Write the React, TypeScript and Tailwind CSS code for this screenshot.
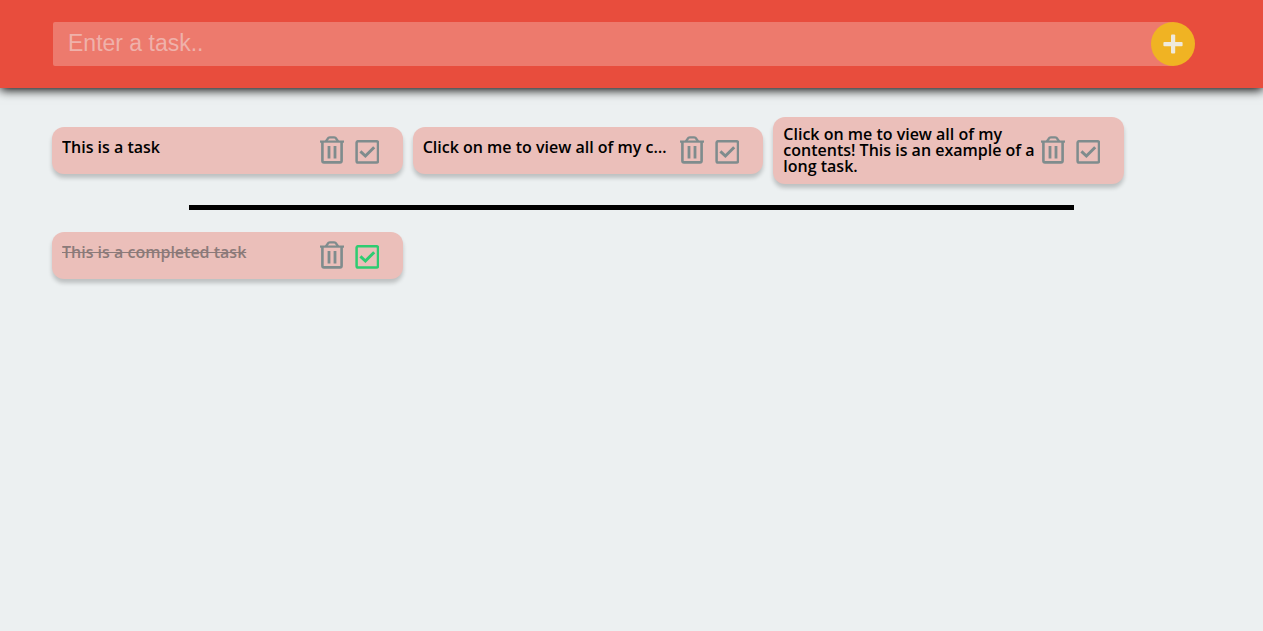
import { useState } from "react";

type Task = { id: number; text: string; done: boolean; expanded: boolean };

const LONG_TEXT = "Click on me to view all of my contents! This is an example of a long task.";

const initialTasks: Task[] = [
  { id: 1, text: "This is a task", done: false, expanded: false },
  { id: 2, text: LONG_TEXT, done: false, expanded: false },
  { id: 3, text: LONG_TEXT, done: false, expanded: true },
  { id: 4, text: "This is a completed task", done: true, expanded: false },
];

function TrashIcon() {
  return (
    <svg width="24" height="28" viewBox="0 0 24 28" fill="none" stroke="currentColor" aria-hidden="true">
      <path d="M0 5.6H24" strokeWidth="2.2" />
      <path d="M6 5.4L7.6 2.8Q8.4 1.4 9.8 1.4H14.2Q15.6 1.4 16.4 2.8L18 5.4" strokeWidth="2.4" />
      <path d="M2.4 5.5V24.8Q2.4 26.4 4 26.4H20Q21.6 26.4 21.6 24.8V5.5" strokeWidth="2.6" />
      <path d="M9 10V22.6M15 10V22.6" strokeWidth="2.8" />
    </svg>
  );
}

function CheckIcon() {
  return (
    <svg width="24" height="24" viewBox="0 0 24 24" fill="none" stroke="currentColor" aria-hidden="true">
      <rect x="1.6" y="1.2" width="21.4" height="21.4" rx="1.6" strokeWidth="2.5" />
      <path d="M5.4 11.4L10.4 16L19.2 7.2" strokeWidth="3" />
    </svg>
  );
}

type CardProps = { task: Task; onExpand: () => void; onRemove: () => void; onToggle: () => void };

function TaskCard({ task, onExpand, onRemove, onToggle }: CardProps) {
  return (
    <li className="flex items-center rounded-[12px] bg-[#ebbfba] pt-[9px] pr-6 pb-[10px] pl-[10px] shadow-[0_4px_4px_rgba(0,0,0,0.2)]">
      <button
        type="button"
        onClick={onExpand}
        className={`min-w-0 flex-1 text-left text-base font-semibold ${
          task.expanded ? "leading-4" : "mb-1.5 truncate pr-2 leading-[22px]"
        } ${task.done ? "text-[#8b7a79] line-through" : "text-black"}`}
      >
        {task.text}
      </button>
      <button type="button" aria-label="Delete task" onClick={onRemove} className="shrink-0 text-[#7f8c8d]">
        <TrashIcon />
      </button>
      <button
        type="button"
        aria-label="Toggle completed"
        onClick={onToggle}
        className={`mt-1 ml-[11px] shrink-0 ${task.done ? "text-[#2ecc71]" : "text-[#7f8c8d]"}`}
      >
        <CheckIcon />
      </button>
    </li>
  );
}

export default function App() {
  const [tasks, setTasks] = useState(initialTasks);
  const [draft, setDraft] = useState("");

  const update = (id: number, change: (task: Task) => Task) =>
    setTasks((all) => all.map((task) => (task.id === id ? change(task) : task)));

  const add = () => {
    const text = draft.trim();
    if (!text) return;
    setTasks((all) => [...all, { id: Date.now(), text, done: false, expanded: false }]);
    setDraft("");
  };

  const list = (done: boolean) => (
    <ul className="grid grid-cols-3 items-center gap-[10px] pr-[139px] pl-[52px]">
      {tasks
        .filter((task) => task.done === done)
        .map((task) => (
          <TaskCard
            key={task.id}
            task={task}
            onExpand={() => update(task.id, (t) => ({ ...t, expanded: !t.expanded }))}
            onRemove={() => setTasks((all) => all.filter((t) => t.id !== task.id))}
            onToggle={() => update(task.id, (t) => ({ ...t, done: !t.done }))}
          />
        ))}
    </ul>
  );

  return (
    <div className="min-h-screen bg-[#ecf0f1] font-['Open_Sans',sans-serif]">
      <header className="bg-[#e84d3d] shadow-[0_2px_10px_#000]">
        <form
          className="flex items-center py-[22px] pr-[68px] pl-[53px]"
          onSubmit={(event) => {
            event.preventDefault();
            add();
          }}
        >
          <input
            type="text"
            aria-label="New task"
            placeholder="Enter a task.."
            value={draft}
            onChange={(event) => setDraft(event.target.value)}
            className="h-11 min-w-0 flex-1 rounded-[2px] bg-[#ed7a6d] pr-8 pb-[2px] pl-[15px] font-['Liberation_Sans',sans-serif] text-[23px] text-[#ecf0f1] outline-none placeholder:text-[#efb1aa]"
          />
          <button
            type="submit"
            aria-label="Add task"
            className="-ml-[22px] flex size-11 shrink-0 items-center justify-center rounded-full bg-[#f0b323] text-[#efeadc]"
          >
            <svg width="20" height="20" viewBox="0 0 20 20" fill="currentColor" aria-hidden="true">
              <rect x="8" y="0.4" width="4.2" height="19.2" rx="1" />
              <rect x="0.4" y="8" width="19.2" height="4.2" rx="1" />
            </svg>
          </button>
        </form>
      </header>
      <main className="pt-[29px]">
        {list(false)}
        <hr className="mx-auto mt-[21px] mb-[22px] h-[5px] w-[70%] border-0 bg-black" />
        {list(true)}
      </main>
    </div>
  );
}
